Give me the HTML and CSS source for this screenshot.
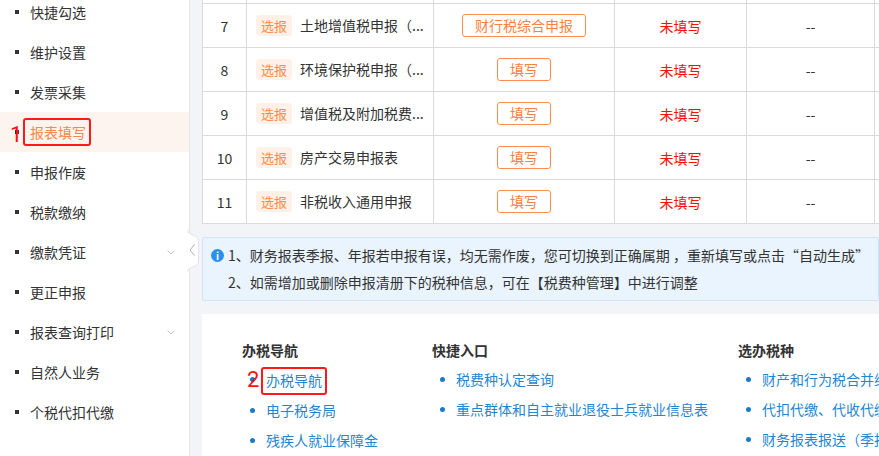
FILE: index.html
```html
<!DOCTYPE html>
<html>
    <head>
        <title>申报</title>
        <link rel="stylesheet" href="styles.css">
    </head>

    <body>
        <div class="page">
            <div class="sidebar">
                <ul class="menu">
                    <li class="menu_item">快捷勾选</li>
                    <li class="menu_item">维护设置</li>
                    <li class="menu_item">发票采集</li>
                    <li class="menu_item active">
                        <span class="mark mark_menu">1</span>
                        <span class="red_box">报表填写</span>
                    </li>
                    <li class="menu_item">申报作废</li>
                    <li class="menu_item">税款缴纳</li>
                    <li class="menu_item">缴款凭证
                        <svg class="arrow" width="8" height="5" viewBox="0 0 8 5"><path d="M0.5 0.5 L4 4 L7.5 0.5" fill="none" stroke="#c4c6cc" stroke-width="1"/></svg>
                    </li>
                    <li class="menu_item">更正申报</li>
                    <li class="menu_item">报表查询打印
                        <svg class="arrow" width="8" height="5" viewBox="0 0 8 5"><path d="M0.5 0.5 L4 4 L7.5 0.5" fill="none" stroke="#c4c6cc" stroke-width="1"/></svg>
                    </li>
                    <li class="menu_item">自然人业务</li>
                    <li class="menu_item">个税代扣代缴</li>
                </ul>
                <!-- collapse handle sits over the sidebar edge -->
                <svg class="collapse_tab" width="14" height="42" viewBox="0 0 14 42">
                    <path d="M0.5 0 C0.5 6 11.5 4 11.5 11 L11.5 31 C11.5 38 0.5 36 0.5 42" fill="#fff" stroke="#e2e4ea" stroke-width="1"/>
                    <path d="M7.5 14.5 L3 20 L7.5 25.5" fill="none" stroke="#a8abb2" stroke-width="1"/>
                </svg>
            </div>

            <div class="content">
                <table class="report_table">
                    <colgroup>
                        <col class="c_no"><col class="c_name"><col class="c_op"><col class="c_state"><col class="c_time"><col class="c_more">
                    </colgroup>
                    <tr class="row_cut"><td></td><td></td><td></td><td></td><td></td><td></td></tr>
                    <tr>
                        <td class="num">7</td>
                        <td class="name"><span class="tag">选报</span>土地增值税申报（...</td>
                        <td class="op"><span class="btn">财行税综合申报</span></td>
                        <td class="state">未填写</td>
                        <td class="time">--</td>
                        <td></td>
                    </tr>
                    <tr>
                        <td class="num">8</td>
                        <td class="name"><span class="tag">选报</span>环境保护税申报（...</td>
                        <td class="op"><span class="btn">填写</span></td>
                        <td class="state">未填写</td>
                        <td class="time">--</td>
                        <td></td>
                    </tr>
                    <tr>
                        <td class="num">9</td>
                        <td class="name"><span class="tag">选报</span>增值税及附加税费...</td>
                        <td class="op"><span class="btn">填写</span></td>
                        <td class="state">未填写</td>
                        <td class="time">--</td>
                        <td></td>
                    </tr>
                    <tr>
                        <td class="num">10</td>
                        <td class="name"><span class="tag">选报</span>房产交易申报表</td>
                        <td class="op"><span class="btn">填写</span></td>
                        <td class="state">未填写</td>
                        <td class="time">--</td>
                        <td></td>
                    </tr>
                    <tr>
                        <td class="num">11</td>
                        <td class="name"><span class="tag">选报</span>非税收入通用申报</td>
                        <td class="op"><span class="btn">填写</span></td>
                        <td class="state">未填写</td>
                        <td class="time">--</td>
                        <td></td>
                    </tr>
                </table>

                <div class="tips">
                    <span class="tips_icon">i</span>
                    <div>1、财务报表季报、年报若申报有误，均无需作废，您可切换到正确属期 ，重新填写或点击“自动生成”</div>
                    <div>2、如需增加或删除申报清册下的税种信息，可在【税费种管理】中进行调整</div>
                </div>

                <div class="nav_card">
                    <div class="nav_col col_a">
                        <div class="nav_title">办税导航</div>
                        <ul class="nav_links">
                            <li><span class="mark mark_link">2</span><span class="red_box link_box">办税导航</span></li>
                            <li>电子税务局</li>
                            <li>残疾人就业保障金</li>
                        </ul>
                    </div>
                    <div class="nav_col col_b">
                        <div class="nav_title">快捷入口</div>
                        <ul class="nav_links">
                            <li>税费种认定查询</li>
                            <li>重点群体和自主就业退役士兵就业信息表</li>
                        </ul>
                    </div>
                    <div class="nav_col">
                        <div class="nav_title">选办税种</div>
                        <ul class="nav_links">
                            <li>财产和行为税合并纳税申报</li>
                            <li>代扣代缴、代收代缴税款报告</li>
                            <li>财务报表报送（季报）</li>
                        </ul>
                    </div>
                </div>
            </div>
        </div>
    </body>
</html>
```

FILE: styles.css
```css
body {
    margin: 0;
    font-family: "Noto Sans CJK SC", "Noto Sans", sans-serif;
    font-size: 14px;
    color: #333;
    overflow: hidden;
}

.page {
    display: flex;
    flex-direction: row;
    height: 456px;
    overflow: hidden;
    background-color: #f3f4f8;
}

/* left menu */
.sidebar {
    position: relative;
    width: 189px;
    flex-shrink: 0;
    background-color: #fff;
    border-right: 1px solid #e4e6ec;
    z-index: 2;
}

.menu {
    list-style: none;
    margin: -8px 0 0 0;
    padding: 0;
}

.menu_item {
    position: relative;
    display: flex;
    align-items: center;
    height: 40px;
    padding: 0 14px 0 15px;
    color: #333;
}

.menu_item::before {
    content: "";
    width: 4px;
    height: 4px;
    margin-right: 11px;
    background-color: #333;
}

.menu_item.active {
    background-color: #fdf4ef;
    color: #f7884a;
}

.arrow {
    margin-left: auto;
}

.collapse_tab {
    position: absolute;
    right: -12px;
    top: 230px;
}

/* red markers drawn over the screenshot */
.mark {
    position: absolute;
    color: #ff1010;
    font-family: Roboto, "Noto Sans", sans-serif;
    font-size: 22px;
    line-height: 22px;
}

.mark_menu {
    left: 10px;
    top: 12px;
}

.red_box {
    display: inline-block;
    border: 2px solid #ff1a1a;
    border-radius: 3px;
    padding: 0 3px 0 5px;
    margin-left: -7px;
    line-height: 24px;
}

/* main area */
.content {
    flex: 1;
    min-width: 0;
    padding-left: 12px;
    overflow: hidden;
}

.report_table {
    table-layout: fixed;
    width: 872px;
    border-collapse: collapse;
    background-color: #fff;
    margin-top: -41px;
}

.c_no { width: 44px; }
.c_name { width: 187px; }
.c_op { width: 181px; }
.c_state { width: 132px; }
.c_time { width: 128px; }
.c_more { width: 200px; }

.report_table td {
    height: 43px;
    padding: 0;
    border: 1px solid #d9d9de;
    white-space: nowrap;
    overflow: hidden;
}

.report_table td.num,
.report_table td.op,
.report_table td.state,
.report_table td.time {
    text-align: center;
}

.report_table td.name {
    padding-left: 9px;
}

.tag {
    display: inline-block;
    width: 36px;
    height: 21px;
    line-height: 21px;
    margin-right: 8px;
    border-radius: 3px;
    background-color: #fff1e8;
    color: #ff8a4c;
    font-size: 13px;
    text-align: center;
}

.btn {
    display: inline-block;
    padding: 0 12px;
    line-height: 21px;
    border: 1px solid #ff8d4f;
    border-radius: 3px;
    color: #ff8040;
}

.state {
    color: #ff0d0d;
}

.tips {
    position: relative;
    margin-top: 13px;
    padding: 4px 0 4px 25px;
    border: 1px solid #cfe4fb;
    border-radius: 2px;
    background-color: #eaf4fe;
    line-height: 27px;
    white-space: nowrap;
}

.tips_icon {
    position: absolute;
    left: 8px;
    top: 11px;
    width: 13px;
    height: 13px;
    border-radius: 50%;
    background-color: #2b8ff0;
    color: #fff;
    font-size: 10px;
    font-weight: bold;
    line-height: 13px;
    text-align: center;
}

.nav_card {
    display: flex;
    flex-direction: row;
    margin-top: 13px;
    padding: 26px 0 20px 40px;
    background-color: #fff;
    white-space: nowrap;
}

.nav_col {
    flex-shrink: 0;
}

.col_a { width: 190px; }
.col_b { width: 306px; }

.nav_title {
    line-height: 20px;
    margin-bottom: 4px;
    font-weight: bold;
    color: #333;
}

.nav_links {
    list-style: none;
    margin: 0;
    padding: 0;
}

.nav_links > li {
    position: relative;
    line-height: 30px;
    padding-left: 24px;
    color: #1f86d2;
}

.nav_links > li::before {
    content: "";
    position: absolute;
    left: 8px;
    top: 13px;
    width: 5px;
    height: 5px;
    border-radius: 50%;
    background-color: #1a7cc6;
}

.mark_link {
    left: 5px;
    top: 5px;
    z-index: 1;
}

.link_box {
    line-height: 22px;
    padding: 0 3px 2px 3px;
    margin-left: -5px;
    vertical-align: middle;
}
```
